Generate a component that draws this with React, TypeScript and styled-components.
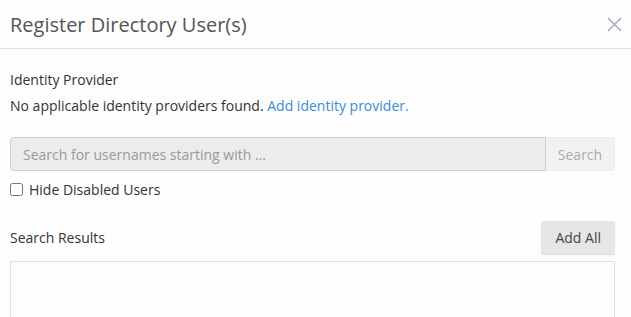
import React from "react";
import styled, { createGlobalStyle } from "styled-components";

const GlobalStyle = createGlobalStyle`
  html, body {
    margin: 0;
    padding: 0;
    background: #fdfdfd;
  }
  body {
    font-family: "Open Sans", "Liberation Sans", sans-serif;
    color: #333;
  }
`;

export default function App() {
  return (
    <>
      <GlobalStyle />
      <Dialog>
        <Header>
          <Title>Register Directory User(s)</Title>
          <CloseButton aria-label="Close">
            <svg width="15" height="15" viewBox="0 0 15 15">
              <path d="M1 1L14 14M14 1L1 14" stroke="#a9afba" strokeWidth="1.6" />
            </svg>
          </CloseButton>
        </Header>
        <Body>
          <Label>Identity Provider</Label>
          <Text>
            No applicable identity providers found. <Link href="#">Add identity provider.</Link>
          </Text>
          <SearchGroup>
            <SearchInput disabled placeholder="Search for usernames starting with ..." />
            <SearchButton disabled>Search</SearchButton>
          </SearchGroup>
          <CheckRow>
            <input type="checkbox" />
            Hide Disabled Users
          </CheckRow>
          <ResultsHead>
            <Label>Search Results</Label>
            <Button>Add All</Button>
          </ResultsHead>
          <Results />
        </Body>
      </Dialog>
    </>
  );
}

const Dialog = styled.div`
  width: 631px;
  height: 317px;
  overflow: hidden;
  background: #fdfdfd;
`;

const Header = styled.div`
  display: flex;
  justify-content: space-between;
  align-items: center;
  height: 48px;
  padding: 0 10px;
  border-bottom: 1px solid #e2e2e2;
`;

const Title = styled.h4`
  margin: 0;
  font-size: 20px;
  font-weight: 400;
  color: #555;
`;

const CloseButton = styled.button`
  border: 0;
  background: none;
  padding: 0;
  margin-right: -1px;
  display: flex;
`;

const Body = styled.div`
  padding: 21px 16px 0 10px;
  font-size: 14px;
`;

const Label = styled.div`
  color: #333;
  line-height: 20px;
`;

const Text = styled.div`
  margin-top: 6px;
  line-height: 20px;
  color: #333;
`;

const Link = styled.a`
  color: #3d8bd0;
  text-decoration: none;
`;

const SearchGroup = styled.div`
  display: flex;
  margin-top: 21px;
  height: 34px;
`;

const SearchInput = styled.input`
  flex: 1;
  box-sizing: border-box;
  height: 34px;
  padding: 0 12px;
  font: inherit;
  font-size: 14px;
  background: #ececec;
  border: 1px solid #cfcfcf;
  border-radius: 3px 0 0 3px;
  &::placeholder {
    color: #9a9a9a;
  }
`;

const SearchButton = styled.button`
  width: 69px;
  height: 34px;
  font: inherit;
  font-size: 14px;
  color: #aaa;
  background: #f2f2f2;
  border: 1px solid #ededed;
  border-left: 0;
  border-radius: 0 3px 3px 0;
`;

const CheckRow = styled.label`
  display: flex;
  align-items: center;
  gap: 6px;
  margin-top: 9px;
  color: #333;
  input {
    margin: 0;
    width: 13px;
    height: 13px;
  }
`;

const ResultsHead = styled.div`
  display: flex;
  justify-content: space-between;
  align-items: center;
  margin-top: 22px;
`;

const Button = styled.button`
  height: 33px;
  padding: 0 14px;
  font: inherit;
  font-size: 14px;
  color: #444;
  background: #e6e6e6;
  border: 0;
  border-radius: 3px;
  box-shadow: 0 1px 1px rgba(0, 0, 0, 0.15);
`;

const Results = styled.div`
  margin-top: 7px;
  height: 80px;
  border: 1px solid #e0e0e0;
`;
